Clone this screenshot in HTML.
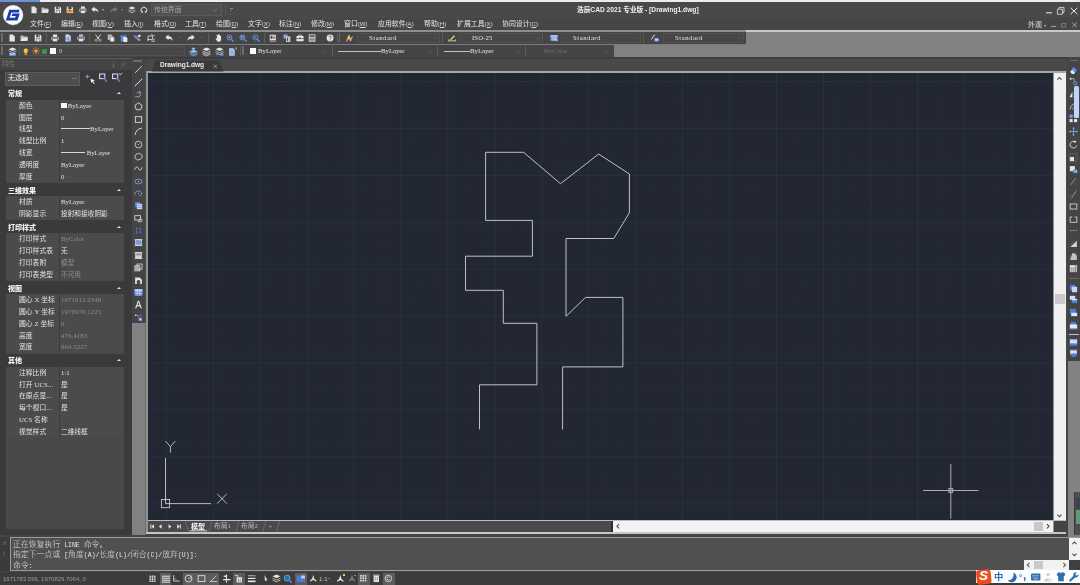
<!DOCTYPE html><html lang="zh"><head><meta charset="utf-8"><title>浩辰CAD 2021 专业版 - [Drawing1.dwg]</title><style>
*{box-sizing:border-box}
html,body{margin:0;padding:0}
body{width:1080px;height:585px;position:relative;overflow:hidden;background:#454545;
 font-family:"Liberation Sans","Noto Sans CJK SC",sans-serif;font-size:6.75px;color:#e4e4e4;line-height:1}
.a{position:absolute}
.t{position:absolute;white-space:nowrap;line-height:1}
.t,.mn,.row,.hd{will-change:transform}
svg{position:absolute;overflow:visible}
.mn{position:absolute;top:21.2px;white-space:nowrap;color:#e6e6e6;font-size:6.9px}
.mn i{font-style:normal;font-size:6.1px;letter-spacing:0;color:#d8d8d8}
.mn u{text-decoration-thickness:0.5px;text-underline-offset:0.5px}
.sf{font-family:"Liberation Serif","Noto Serif CJK SC",serif}
.mono{font-family:"Liberation Mono","Noto Sans CJK SC",monospace}
.row{position:absolute;left:6px;width:118px;height:11.3px;background:#4b4a4d}
.row b{position:absolute;left:13px;top:3.0px;font-weight:normal;color:#e2e2e2;font-size:6.8px;white-space:nowrap}
.row s{position:absolute;left:55px;top:2.4px;text-decoration:none;color:#e2e2e2;font-size:6.3px;white-space:nowrap}
.row .d{color:#8d8d90}
.row em{position:absolute;left:53px;top:0;width:.6px;height:100%;background:#3c3c3e}
.hd{position:absolute;left:6px;width:118px;height:12.6px;color:#f2f2f2;font-weight:bold;font-size:7px}
.hd b{position:absolute;left:2px;top:2.6px;white-space:nowrap}
.hd i{position:absolute;left:110.6px;top:5px;width:0;height:0;border-left:2px solid transparent;border-right:2px solid transparent;border-bottom:2.4px solid #e6e6e6}
</style></head><body>
<div class="a" style="left:0px;top:0px;width:1080px;height:2px;background:#ececf0;"></div>
<div class="a" style="left:0px;top:0px;width:40px;height:1.8px;background:#6f8fdc;"></div>
<div class="a" style="left:0px;top:2px;width:1080px;height:28.3px;background:#474647;"></div>
<div class="a" style="left:0px;top:2px;width:1080px;height:16.2px;background:#4a494a;"></div>
<div class="a" style="left:0px;top:30.2px;width:1080px;height:1.6px;background:#c9c9c9;"></div>
<div class="a" style="left:0px;top:30.2px;width:746px;height:1.6px;background:#8e8e8e;"></div>
<div class="a" style="left:0px;top:31.7px;width:1080px;height:25.3px;background:#838182;"></div>
<div class="a" style="left:0px;top:31.7px;width:746px;height:12.1px;background:#454545;"></div>
<div class="a" style="left:0px;top:43.8px;width:746px;height:1.4px;background:#7c7b7c;"></div>
<div class="a" style="left:0px;top:45.2px;width:614px;height:11.6px;background:#454545;"></div>
<div class="a" style="left:0px;top:56.8px;width:1080px;height:2px;background:#3d3d3d;"></div>
<div class="a" style="left:0px;top:58.4px;width:131.5px;height:0.9px;background:#5a5a5a;"></div>
<div class="a" style="left:0px;top:59.3px;width:131.5px;height:476px;background:#3a393c;"></div>
<div class="a" style="left:0px;top:59.3px;width:131.5px;height:10.6px;background:#444345;"></div>
<div class="a" style="left:6px;top:100px;width:118px;height:428.7px;background:#4a484b;"></div>
<div class="a" style="left:131.5px;top:59.3px;width:13.3px;height:264px;background:#444444;"></div>
<div class="a" style="left:131.5px;top:323px;width:13.2px;height:212.5px;background:#828182;"></div>
<div class="a" style="left:144.8px;top:59.3px;width:1.3px;height:264px;background:#4a4a4a;"></div>
<div class="a" style="left:144.8px;top:323.3px;width:1.3px;height:212px;background:#6e6e6e;"></div>
<div class="a" style="left:146.5px;top:59.3px;width:920px;height:12.5px;background:#494949;"></div>
<div class="a" style="left:146.1px;top:71.2px;width:920.4px;height:462.6px;background:#c6c6c6;"></div>
<div class="a" style="left:146.1px;top:71.2px;width:919px;height:461px;background:#8f9292;"></div>
<div class="a" style="left:148px;top:71.2px;width:917px;height:1.8px;background:#a6a6a6;"></div>
<div class="a" style="left:148.2px;top:73px;width:905.3px;height:447px;background:#222733;"></div>
<div class="a" style="left:1053.5px;top:73px;width:12px;height:447px;background:#f0f0f0;"></div>
<div class="a" style="left:148.2px;top:520px;width:917px;height:1.1px;background:#bcbcbc;"></div>
<div class="a" style="left:148px;top:521px;width:464px;height:11px;background:#4a4a4a;"></div>
<div class="a" style="left:612px;top:521px;width:441px;height:10.6px;background:#f2f2f2;"></div>
<div class="a" style="left:1053.5px;top:521px;width:12px;height:10.6px;background:#444;"></div>
<div class="a" style="left:146.5px;top:533.6px;width:920px;height:3.6px;background:#444;"></div>
<div class="a" style="left:0px;top:535.3px;width:146.5px;height:2px;background:#444;"></div>
<div class="a" style="left:1066.3px;top:57px;width:1.2px;height:304px;background:#474747;"></div>
<div class="a" style="left:1067.5px;top:57px;width:12.5px;height:304px;background:#444444;"></div>
<div class="a" style="left:1067.5px;top:361px;width:12.5px;height:176px;background:#838283;"></div>
<div class="a" style="left:0px;top:537.2px;width:1080px;height:34px;background:#3b3b3b;"></div>
<div class="a" style="left:9.6px;top:537.2px;width:1070.4px;height:34.3px;background:#9c9c9c;"></div>
<div class="a" style="left:10.6px;top:538.2px;width:1069.4px;height:32.3px;background:#505050;"></div>
<div class="a" style="left:0px;top:571.5px;width:1080px;height:13.5px;background:#3c3c3c;"></div>
<svg style="left:148px;top:73px" width="905" height="447" viewBox="148 73 905 447"><defs><clipPath id="cv"><rect x="148" y="73" width="905" height="447"/></clipPath></defs><g clip-path="url(#cv)"><path d="M156.86 73V520M166.25 73V520M175.64 73V520M185.03 73V520M194.42 73V520M203.81 73V520M213.20 73V520M222.59 73V520M231.98 73V520M241.37 73V520M250.76 73V520M260.15 73V520M269.54 73V520M278.93 73V520M288.32 73V520M297.71 73V520M307.10 73V520M316.49 73V520M325.88 73V520M335.27 73V520M344.66 73V520M354.05 73V520M363.44 73V520M372.83 73V520M382.22 73V520M391.61 73V520M401.00 73V520M410.39 73V520M419.78 73V520M429.17 73V520M438.56 73V520M447.95 73V520M457.34 73V520M466.73 73V520M476.12 73V520M485.51 73V520M494.90 73V520M504.29 73V520M513.68 73V520M523.07 73V520M532.46 73V520M541.85 73V520M551.24 73V520M560.63 73V520M570.02 73V520M579.41 73V520M588.80 73V520M598.19 73V520M607.58 73V520M616.97 73V520M626.36 73V520M635.75 73V520M645.14 73V520M654.53 73V520M663.92 73V520M673.31 73V520M682.70 73V520M692.09 73V520M701.48 73V520M710.87 73V520M720.26 73V520M729.65 73V520M739.04 73V520M748.43 73V520M757.82 73V520M767.21 73V520M776.60 73V520M785.99 73V520M795.38 73V520M804.77 73V520M814.16 73V520M823.55 73V520M832.94 73V520M842.33 73V520M851.72 73V520M861.11 73V520M870.50 73V520M879.89 73V520M889.28 73V520M898.67 73V520M908.06 73V520M917.45 73V520M926.84 73V520M936.23 73V520M945.62 73V520M955.01 73V520M964.40 73V520M973.79 73V520M983.18 73V520M992.57 73V520M1001.96 73V520M1011.35 73V520M1020.74 73V520M1030.13 73V520M1039.52 73V520M1048.91 73V520M148 81.35H1053M148 90.74H1053M148 100.13H1053M148 109.52H1053M148 118.91H1053M148 128.30H1053M148 137.69H1053M148 147.08H1053M148 156.47H1053M148 165.86H1053M148 175.25H1053M148 184.64H1053M148 194.03H1053M148 203.42H1053M148 212.81H1053M148 222.20H1053M148 231.59H1053M148 240.98H1053M148 250.37H1053M148 259.76H1053M148 269.15H1053M148 278.54H1053M148 287.93H1053M148 297.32H1053M148 306.71H1053M148 316.10H1053M148 325.49H1053M148 334.88H1053M148 344.27H1053M148 353.66H1053M148 363.05H1053M148 372.44H1053M148 381.83H1053M148 391.22H1053M148 400.61H1053M148 410.00H1053M148 419.39H1053M148 428.78H1053M148 438.17H1053M148 447.56H1053M148 456.95H1053M148 466.34H1053M148 475.73H1053M148 485.12H1053M148 494.51H1053M148 503.90H1053M148 513.29H1053" stroke="#252a36" stroke-width="0.6" fill="none"/><path d="M166.25 73V520M213.20 73V520M260.15 73V520M307.10 73V520M354.05 73V520M401.00 73V520M447.95 73V520M494.90 73V520M541.85 73V520M588.80 73V520M635.75 73V520M682.70 73V520M729.65 73V520M776.60 73V520M823.55 73V520M870.50 73V520M917.45 73V520M964.40 73V520M1011.35 73V520M148 81.35H1053M148 128.30H1053M148 175.25H1053M148 222.20H1053M148 269.15H1053M148 316.10H1053M148 363.05H1053M148 410.00H1053M148 456.95H1053M148 503.90H1053" stroke="#323845" stroke-width="0.55" fill="none"/><polyline points="479.5,429.5 479.5,384.8 536.9,384.8 536.9,323.3 503.3,323.3 503.3,290.3 465.5,290.3 465.5,256.2 532.4,256.2 532.4,220.4 485.6,220.4 485.6,152.3 523.6,152.3 560.5,183.7 598.7,154 629.4,174 629.4,212.8 613.8,238.5 566,238.5 566,316.3 585.5,297.4 622.9,297.4 622.9,366.9 562.6,366.9 562.6,429.5" stroke="#cfd2d8" stroke-width="0.9" fill="none" stroke-linejoin="miter"/><g stroke="#cfd2d8" stroke-width="0.85" fill="none"><rect x="161.4" y="499.5" width="8.2" height="8.2"/><path d="M165.5 503.6V458M165.5 503.6H211"/><path d="M165.6 441.2L170.4 446.6L175.3 441.2M170.4 446.6V452.6"/><path d="M217.2 493.8L226.8 503.6M226.8 493.8L217.2 503.6"/></g><g stroke="#b9bcc4" stroke-width="0.9" fill="none"><path d="M923 490.5H978.5M950.8 463.8V518.6"/><rect x="948.9" y="488.6" width="3.8" height="3.8"/></g></g></svg>
<svg style="left:2.6px;top:4.7px" width="20.2" height="20.2" viewBox="0 0 40 40"><circle cx="20" cy="20" r="19.6" fill="#fbfcff"/><circle cx="20" cy="20" r="19.6" fill="none" stroke="#dfe6d8" stroke-width="0.8"/><path d="M12.5 9.5H33l-2 5.6H16.6L13 25.4h11l1.3-3.8H17.2l1.5-4.6h14.6L28.6 30.8H5.6z" fill="#1d3bb0"/></svg>
<svg style="left:29.50px;top:6.30px" width="7.8" height="7.8" viewBox="0 0 16 16"><path d="M3 1h7l3.5 3.5V15H3z" fill="#e6e6e6"/><path d="M10 1v3.5h3.5z" fill="#9a9a9a"/></svg>
<svg style="left:41.10px;top:6.30px" width="7.8" height="7.8" viewBox="0 0 16 16"><path d="M1 3h5l1.5 2H15v9H1z" fill="#bdbdbd"/><path d="M1 14l2.5-6.5H16L14 14z" fill="#e6e6e6"/></svg>
<svg style="left:53.90px;top:6.30px" width="7.8" height="7.8" viewBox="0 0 16 16"><path d="M1.5 1.5h11l2 2v11h-13z" fill="#e6e6e6"/><rect x="4.5" y="1.5" width="7" height="5" fill="#454545"/><rect x="8.6" y="2.3" width="1.8" height="3.2" fill="#e6e6e6"/><rect x="3.8" y="9" width="8.4" height="5.5" fill="#454545"/><rect x="4.8" y="10" width="6.4" height="4.5" fill="#e6e6e6"/></svg>
<svg style="left:66.30px;top:6.30px" width="7.8" height="7.8" viewBox="0 0 16 16"><path d="M1.5 1.5h11l2 2v11h-13z" fill="#f3d9c4"/><rect x="4.5" y="1.5" width="7" height="4.6" fill="#454545"/><path d="M1.5 8h13v3.5L9.600 15.400H6.400L1.500 11.500z" fill="#ee9a4a"/><path d="M5 7.600h6l-3 3.600z" fill="#454545"/></svg>
<svg style="left:78.90px;top:6.30px" width="7.8" height="7.8" viewBox="0 0 16 16"><rect x="4" y="1" width="8" height="5" fill="#e6e6e6"/><rect x="0.8" y="5.2" width="14.4" height="7" rx="1" fill="#bdbdbd"/><rect x="3.5" y="9.3" width="9" height="5.7" fill="#e6e6e6" stroke="#454545" stroke-width="0.9"/><rect x="2" y="6.7" width="12" height="1" fill="#454545"/></svg>
<svg style="left:91.10px;top:6.30px" width="7.8" height="7.8" viewBox="0 0 16 16"><path d="M0.8 6.5L7 1.2v3.2c5 0 8 3 8.2 9.6-1.6-3.6-4-4.8-8.2-4.8v3.4z" fill="#e6e6e6"/></svg>
<svg style="left:110.30px;top:6.30px" width="7.8" height="7.8" viewBox="0 0 16 16"><path d="M15.2 6.5L9 1.2v3.2c-5 0-8 3-8.2 9.6 1.6-3.6 4-4.8 8.2-4.8v3.4z" fill="#777"/></svg>
<svg style="left:128.30px;top:6.30px" width="7.8" height="7.8" viewBox="0 0 16 16"><path d="M8 1l7 3.2-7 3.2-7-3.2z" fill="#e6e6e6"/><path d="M1 7.6l7 3.2 7-3.2M1 10.8l7 3.2 7-3.2" stroke="#bdbdbd" stroke-width="1.6" fill="none"/></svg>
<svg style="left:140.10px;top:6.30px" width="7.8" height="7.8" viewBox="0 0 16 16"><path d="M3.5 12.5A6 6 0 1 1 12.5 12.5" fill="none" stroke="#e6e6e6" stroke-width="2"/><path d="M1 11h5v4z" fill="#e6e6e6"/><path d="M15 11h-5v4z" fill="#e6e6e6"/></svg>
<div class="a" style="left:102.1px;top:9.450000000000001px;width:0;height:0;border-left:1.9px solid transparent;border-right:1.9px solid transparent;border-top:2.28px solid #b5b5b5"></div>
<div class="a" style="left:121.39999999999999px;top:9.450000000000001px;width:0;height:0;border-left:1.9px solid transparent;border-right:1.9px solid transparent;border-top:2.28px solid #858585"></div>
<div class="a" style="left:151px;top:3.8px;width:70.5px;height:12.2px;background:#4f4f4f;border:0.6px solid #5a5a5a"></div>
<div class="t " style="left:153.5px;top:6.6px;font-size:6.9px;color:#a2a2a2;">传统界面</div>
<svg style="left:212.60px;top:9.10px" width="4" height="2.6" viewBox="0 0 4 2.6"><path d="M0.3 0.3L2 2.2L3.7 0.3" fill="none" stroke="#7b7b7b" stroke-width="0.8"/></svg>
<div class="a" style="left:225.4px;top:4px;width:0.7px;height:12px;background:#555;"></div>
<div class="a" style="left:229.79999999999998px;top:9.5px;width:0;height:0;border-left:1.4px solid transparent;border-right:1.4px solid transparent;border-top:1.68px solid #8a8a8a"></div>
<div class="a" style="left:229.8px;top:8.2px;width:2.8px;height:0.7px;background:#8a8a8a;"></div>
<div class="t " style="left:577px;top:7.1px;font-size:6.7px;color:#f0f0f0;font-weight:bold;letter-spacing:-0.02px">浩辰CAD 2021 专业版 - [Drawing1.dwg]</div>
<svg style="left:1044px;top:5px" width="36" height="12" viewBox="1044 5 36 12"><g stroke="#e4e4e4" fill="none"><path d="M1046 12.8h6" stroke-width="1.1"/><path d="M1057.4 9.2h5v5h-5zM1059 9.2V7.4h5v5h-1.6" stroke-width="0.8"/><path d="M1070.6 7.8l6.8 6.4M1077.4 7.8l-6.8 6.4" stroke-width="1"/></g></svg>
<div class="mn" style="left:30.4px">文件<i>(<u>F</u>)</i></div>
<div class="mn" style="left:61.2px">编辑<i>(<u>E</u>)</i></div>
<div class="mn" style="left:92.4px">视图<i>(<u>V</u>)</i></div>
<div class="mn" style="left:123.6px">插入<i>(<u>I</u>)</i></div>
<div class="mn" style="left:153.6px">格式<i>(<u>O</u>)</i></div>
<div class="mn" style="left:185.2px">工具<i>(<u>T</u>)</i></div>
<div class="mn" style="left:216.2px">绘图<i>(<u>D</u>)</i></div>
<div class="mn" style="left:248.2px">文字<i>(<u>X</u>)</i></div>
<div class="mn" style="left:279.4px">标注<i>(<u>N</u>)</i></div>
<div class="mn" style="left:311.4px">修改<i>(<u>M</u>)</i></div>
<div class="mn" style="left:344.4px">窗口<i>(<u>W</u>)</i></div>
<div class="mn" style="left:378.4px">应用软件<i>(<u>A</u>)</i></div>
<div class="mn" style="left:424.4px">帮助<i>(<u>H</u>)</i></div>
<div class="mn" style="left:456.6px">扩展工具<i>(<u>X</u>)</i></div>
<div class="mn" style="left:502.2px">协同设计<i>(<u>C</u>)</i></div>
<div class="t " style="left:1027.6px;top:21.9px;font-size:6.9px;color:#e0e0e0;">外观</div>
<div class="a" style="left:1043.5px;top:24.75px;width:0;height:0;border-left:1.7px solid transparent;border-right:1.7px solid transparent;border-top:2.04px solid #c8c8c8"></div>
<svg style="left:1049px;top:20px" width="31" height="10" viewBox="1049 20 31 10"><g stroke="#bdbdbd" fill="none" stroke-width="0.8"><path d="M1051 26.4h5"/><path d="M1061.4 23.6h4.4v3.4h-4.4z" stroke="#8d8d8d"/><path d="M1072.4 22.8l4.4 4.2M1076.8 22.8l-4.4 4.2"/></g></svg>
<div class="a" style="left:1.2px;top:33px;width:1.6px;height:9px;background:#6b6b6b;"></div>
<svg style="left:7.95px;top:33.75px" width="8.1" height="8.1" viewBox="0 0 16 16"><path d="M3 1h7l3.5 3.5V15H3z" fill="#e6e6e6"/><path d="M10 1v3.5h3.5z" fill="#9a9a9a"/></svg>
<svg style="left:20.45px;top:33.75px" width="8.1" height="8.1" viewBox="0 0 16 16"><path d="M1 3h5l1.5 2H15v9H1z" fill="#bdbdbd"/><path d="M1 14l2.5-6.5H16L14 14z" fill="#e6e6e6"/></svg>
<svg style="left:33.55px;top:33.75px" width="8.1" height="8.1" viewBox="0 0 16 16"><path d="M1.5 1.5h11l2 2v11h-13z" fill="#e6e6e6"/><rect x="4.5" y="1.5" width="7" height="5" fill="#454545"/><rect x="8.6" y="2.3" width="1.8" height="3.2" fill="#e6e6e6"/><rect x="3.8" y="9" width="8.4" height="5.5" fill="#454545"/><rect x="4.8" y="10" width="6.4" height="4.5" fill="#e6e6e6"/></svg>
<svg style="left:50.95px;top:33.75px" width="8.1" height="8.1" viewBox="0 0 16 16"><rect x="4" y="1" width="8" height="5" fill="#e6e6e6"/><rect x="0.8" y="5.2" width="14.4" height="7" rx="1" fill="#bdbdbd"/><rect x="3.5" y="9.3" width="9" height="5.7" fill="#e6e6e6" stroke="#454545" stroke-width="0.9"/><rect x="2" y="6.7" width="12" height="1" fill="#454545"/></svg>
<svg style="left:63.95px;top:33.75px" width="8.1" height="8.1" viewBox="0 0 16 16"><path d="M3 1h7l3.5 3.5V15H3z" fill="#c9d6ee"/><path d="M10 1v3.5h3.5z" fill="#8ea6d6"/><circle cx="8" cy="9.5" r="2.6" fill="none" stroke="#3d66c4" stroke-width="1.3"/><path d="M10 11.5l2.4 2.4" stroke="#3d66c4" stroke-width="1.4"/></svg>
<svg style="left:76.95px;top:33.75px" width="8.1" height="8.1" viewBox="0 0 16 16"><rect x="4" y="0.5" width="8" height="5" fill="#9db8ee"/><rect x="0.8" y="5.2" width="14.4" height="7" rx="1" fill="#bdbdbd"/><rect x="3.5" y="9.3" width="9" height="5.7" fill="#e6e6e6" stroke="#454545" stroke-width="0.9"/><rect x="2" y="6.7" width="12" height="1" fill="#454545"/></svg>
<svg style="left:93.95px;top:33.75px" width="8.1" height="8.1" viewBox="0 0 16 16"><path d="M3 1l6.2 9M13 1L6.8 10" stroke="#e6e6e6" stroke-width="1.8" fill="none"/><circle cx="4.3" cy="12.4" r="2.2" fill="none" stroke="#bdbdbd" stroke-width="1.5"/><circle cx="11.7" cy="12.4" r="2.2" fill="none" stroke="#bdbdbd" stroke-width="1.5"/></svg>
<svg style="left:106.95px;top:33.75px" width="8.1" height="8.1" viewBox="0 0 16 16"><path d="M1.5 1h7l2 2v9h-9z" fill="#bdbdbd"/><path d="M6 5h6l2.5 2.5V15.5H6z" fill="#e6e6e6" stroke="#454545" stroke-width="0.8"/></svg>
<svg style="left:119.95px;top:33.75px" width="8.1" height="8.1" viewBox="0 0 16 16"><rect x="1.5" y="2" width="11" height="13" rx="1" fill="#5b8be0"/><rect x="4.5" y="0.8" width="5" height="3" fill="#2f55b0"/><path d="M6.5 6h5.5l2.5 2.5V15.6H6.5z" fill="#e6e6e6"/></svg>
<svg style="left:132.95px;top:33.75px" width="8.1" height="8.1" viewBox="0 0 16 16"><path d="M1 2l6 1.5 5 6-3 3-6-5z" fill="#6b7fe0"/><path d="M9 3l5-2 1.5 3.5-4 2.5z" fill="#e6e6e6"/><path d="M12 9l2.5 3-2 2.5-2.5-3z" fill="#f0c040"/></svg>
<svg style="left:146.55px;top:33.75px" width="8.1" height="8.1" viewBox="0 0 16 16"><rect x="2" y="4" width="9" height="7" fill="none" stroke="#e6e6e6" stroke-width="1.5"/><path d="M8 1l7 3" stroke="#e6e6e6" stroke-width="1.4"/><rect x="9" y="9.5" width="6" height="6" fill="#bdbdbd"/><rect x="10.6" y="11" width="2.8" height="3" fill="#454545"/><rect x="1" y="10" width="3" height="3" fill="#e6e6e6"/></svg>
<svg style="left:164.95px;top:33.75px" width="8.1" height="8.1" viewBox="0 0 16 16"><path d="M0.8 6.5L7 1.2v3.2c5 0 8 3 8.2 9.6-1.6-3.6-4-4.8-8.2-4.8v3.4z" fill="#e6e6e6"/></svg>
<svg style="left:186.95px;top:33.75px" width="8.1" height="8.1" viewBox="0 0 16 16"><path d="M15.2 6.5L9 1.2v3.2c-5 0-8 3-8.2 9.6 1.6-3.6 4-4.8 8.2-4.8v3.4z" fill="#e6e6e6"/></svg>
<svg style="left:214.55px;top:33.75px" width="8.1" height="8.1" viewBox="0 0 16 16"><path d="M4 7V2.5a1 1 0 0 1 2 0V6V1.5a1 1 0 0 1 2 0V6V2.2a1 1 0 0 1 2 0V7l0-2.5a1 1 0 0 1 2 0V11c0 2.5-1.5 4.5-4 4.5S3.5 14 2 10.5L1 8.5c.8-1 2-.8 3 .5z" fill="#e6e6e6"/><path d="M1.5 2.5h3M3 1v3" stroke="#67c0a0" stroke-width="1"/></svg>
<svg style="left:226.15px;top:33.75px" width="8.1" height="8.1" viewBox="0 0 16 16"><circle cx="6.8" cy="6.8" r="5" fill="#31426a" stroke="#6f9be8" stroke-width="1.7"/><path d="M10.6 10.6l4.2 4.2" stroke="#6f9be8" stroke-width="2.2"/><path d="M4.3 6.8h5M6.8 4.3v5" stroke="#e6e6e6" stroke-width="1"/></svg>
<svg style="left:238.55px;top:33.75px" width="8.1" height="8.1" viewBox="0 0 16 16"><circle cx="6.8" cy="6.8" r="5" fill="#31426a" stroke="#6f9be8" stroke-width="1.7"/><path d="M10.6 10.6l4.2 4.2" stroke="#6f9be8" stroke-width="2.2"/><rect x="4.4" y="4.8" width="4.8" height="4" fill="none" stroke="#e6e6e6" stroke-width="0.9"/></svg>
<svg style="left:251.95px;top:33.75px" width="8.1" height="8.1" viewBox="0 0 16 16"><circle cx="6.8" cy="6.8" r="5" fill="#31426a" stroke="#6f9be8" stroke-width="1.7"/><path d="M10.6 10.6l4.2 4.2" stroke="#6f9be8" stroke-width="2.2"/><path d="M9 6.8H4.8l2-2M4.8 6.8l2 2" stroke="#e6e6e6" stroke-width="0.9" fill="none"/></svg>
<svg style="left:268.95px;top:33.75px" width="8.1" height="8.1" viewBox="0 0 16 16"><rect x="1.5" y="1.5" width="12" height="11" fill="#e6e6e6"/><rect x="3" y="3.5" width="4" height="6" fill="#454545"/><rect x="8.5" y="3.5" width="3.5" height="1.2" fill="#454545"/><rect x="8.5" y="6" width="3.5" height="1.2" fill="#454545"/><rect x="8.5" y="8.5" width="3.5" height="1.2" fill="#454545"/><rect x="1.5" y="13.5" width="12" height="1.5" fill="#bdbdbd"/></svg>
<svg style="left:282.55px;top:33.75px" width="8.1" height="8.1" viewBox="0 0 16 16"><rect x="1" y="1" width="8" height="8" fill="#8aa6e6"/><rect x="6" y="5" width="8.5" height="10.5" fill="#e6e6e6"/><rect x="7.5" y="7" width="2.3" height="7" fill="#454545"/><rect x="11" y="7" width="2" height="7" fill="#7f9be0"/></svg>
<svg style="left:295.55px;top:33.75px" width="8.1" height="8.1" viewBox="0 0 16 16"><path d="M5 4V2h6v2" fill="none" stroke="#e6e6e6" stroke-width="1.4"/><rect x="1" y="4" width="14" height="10.5" rx="1" fill="#e6e6e6"/><rect x="1" y="8" width="14" height="1.3" fill="#454545"/><rect x="6.8" y="7" width="2.4" height="3.2" fill="#454545"/></svg>
<svg style="left:307.95px;top:33.75px" width="8.1" height="8.1" viewBox="0 0 16 16"><rect x="1.5" y="0.8" width="13" height="14.6" fill="#e6e6e6"/><rect x="3" y="2.4" width="10" height="3" fill="#454545"/><rect x="3.0" y="7.0" width="2.6" height="1.8" fill="#454545"/><rect x="3.0" y="9.8" width="2.6" height="1.8" fill="#454545"/><rect x="3.0" y="12.6" width="2.6" height="1.8" fill="#454545"/><rect x="6.6" y="7.0" width="2.6" height="1.8" fill="#454545"/><rect x="6.6" y="9.8" width="2.6" height="1.8" fill="#454545"/><rect x="6.6" y="12.6" width="2.6" height="1.8" fill="#454545"/><rect x="10.2" y="7.0" width="2.6" height="1.8" fill="#454545"/><rect x="10.2" y="9.8" width="2.6" height="1.8" fill="#454545"/><rect x="10.2" y="12.6" width="2.6" height="1.8" fill="#454545"/></svg>
<svg style="left:325.55px;top:33.75px" width="8.1" height="8.1" viewBox="0 0 16 16"><circle cx="8" cy="8" r="6.8" fill="#e6e6e6"/><path d="M5.6 6.2c0-3.4 5-3.2 4.8 0 0 1.6-2.4 1.8-2.4 3.8" fill="none" stroke="#555" stroke-width="1.5"/><circle cx="8" cy="12" r="1" fill="#555"/></svg>
<svg style="left:344.95px;top:33.75px" width="8.1" height="8.1" viewBox="0 0 16 16"><path d="M2 14L7 2h1.6L13 14h-2.2l-1-3H5.2l-1 3z" fill="#e8c840"/><path d="M9 13l5.5-9 1 1-4 9z" fill="#d8a8e8"/><path d="M1 15h8" stroke="#c060d0" stroke-width="1"/></svg>
<svg style="left:447.55px;top:33.75px" width="8.1" height="8.1" viewBox="0 0 16 16"><path d="M1 13.5h14" stroke="#e6e6e6" stroke-width="1.6"/><path d="M1 10v5M15 10v5" stroke="#e6e6e6" stroke-width="1"/><path d="M4 11l7.5-8.5 2.5 2L6.5 12 3.4 12.6z" fill="#f0d060"/></svg>
<svg style="left:549.55px;top:33.75px" width="8.1" height="8.1" viewBox="0 0 16 16"><rect x="1" y="2" width="14" height="12" fill="#5f86dc"/><path d="M1 6h14M1 10h14M6 2v12M10.5 2v12" stroke="#dfe8fb" stroke-width="1.1"/><rect x="1" y="2" width="14" height="3.4" fill="#a9c0f0"/><path d="M9 9l6 5" stroke="#fff" stroke-width="1.5"/></svg>
<svg style="left:650.95px;top:33.75px" width="8.1" height="8.1" viewBox="0 0 16 16"><path d="M1 11L6 2h2" fill="none" stroke="#e6e6e6" stroke-width="1.7"/><rect x="6.5" y="7.5" width="9" height="7.5" fill="#5f86dc"/><rect x="8" y="9.6" width="6" height="3.6" fill="#cfdcf8"/></svg>
<div class="a" style="left:45.5px;top:32.6px;width:0.8px;height:10px;background:#5c5c5c;"></div>
<div class="a" style="left:89.1px;top:32.6px;width:0.8px;height:10px;background:#5c5c5c;"></div>
<div class="a" style="left:207.5px;top:32.6px;width:0.8px;height:10px;background:#5c5c5c;"></div>
<div class="a" style="left:263.5px;top:32.6px;width:0.8px;height:10px;background:#5c5c5c;"></div>
<div class="a" style="left:336.5px;top:32.6px;width:0.8px;height:10px;background:#5c5c5c;"></div>
<div class="a" style="left:441.5px;top:32.6px;width:0.8px;height:10px;background:#5c5c5c;"></div>
<div class="a" style="left:541.5px;top:32.6px;width:0.8px;height:10px;background:#5c5c5c;"></div>
<div class="a" style="left:642.5px;top:32.6px;width:0.8px;height:10px;background:#5c5c5c;"></div>
<div class="a" style="left:338.8px;top:33px;width:1.6px;height:9px;background:#6b6b6b;"></div>
<div class="a" style="left:178.7px;top:37.35px;width:0;height:0;border-left:1.3px solid transparent;border-right:1.3px solid transparent;border-top:1.56px solid #7c7c7c"></div>
<div class="a" style="left:200.7px;top:37.35px;width:0;height:0;border-left:1.3px solid transparent;border-right:1.3px solid transparent;border-top:1.56px solid #7c7c7c"></div>
<div class="a" style="left:357px;top:32.8px;width:83px;height:10px;background:#474747;border:0.5px solid #505050"></div>
<div class="a" style="left:459px;top:32.8px;width:81px;height:10px;background:#474747;border:0.5px solid #505050"></div>
<div class="a" style="left:561px;top:32.8px;width:80px;height:10px;background:#474747;border:0.5px solid #505050"></div>
<div class="a" style="left:663px;top:32.8px;width:81px;height:10px;background:#474747;border:0.5px solid #505050"></div>
<div class="t sf" style="left:369.2px;top:34.8px;font-size:6.75px;color:#e6e6e6;letter-spacing:0.5px">Standard</div>
<div class="t sf" style="left:472.2px;top:34.8px;font-size:6.75px;color:#e6e6e6;letter-spacing:0.1px">ISO-25</div>
<div class="t sf" style="left:573.2px;top:34.8px;font-size:6.75px;color:#e6e6e6;letter-spacing:0.5px">Standard</div>
<div class="t sf" style="left:675.2px;top:34.8px;font-size:6.75px;color:#e6e6e6;letter-spacing:0.5px">Standard</div>
<svg style="left:433.00px;top:36.60px" width="4" height="2.6" viewBox="0 0 4 2.6"><path d="M0.3 0.3L2 2.2L3.7 0.3" fill="none" stroke="#5a5a5a" stroke-width="0.8"/></svg>
<svg style="left:535.00px;top:36.60px" width="4" height="2.6" viewBox="0 0 4 2.6"><path d="M0.3 0.3L2 2.2L3.7 0.3" fill="none" stroke="#5a5a5a" stroke-width="0.8"/></svg>
<svg style="left:635.00px;top:36.60px" width="4" height="2.6" viewBox="0 0 4 2.6"><path d="M0.3 0.3L2 2.2L3.7 0.3" fill="none" stroke="#5a5a5a" stroke-width="0.8"/></svg>
<svg style="left:737.00px;top:36.60px" width="4" height="2.6" viewBox="0 0 4 2.6"><path d="M0.3 0.3L2 2.2L3.7 0.3" fill="none" stroke="#5a5a5a" stroke-width="0.8"/></svg>
<div class="a" style="left:1.2px;top:46.4px;width:1.6px;height:9px;background:#6b6b6b;"></div>
<svg style="left:7.50px;top:46.90px" width="9" height="9" viewBox="0 0 16 16"><path d="M8 1l7 3-7 3-7-3z" fill="#e6e6e6"/><path d="M1 7l7 3 7-3" stroke="#bdbdbd" stroke-width="1.5" fill="none"/><rect x="2" y="10" width="12" height="5.5" fill="#6f93e0"/><path d="M3.5 11.8h9M3.5 13.8h9" stroke="#e8eefc" stroke-width="0.9"/></svg>
<svg style="left:189.10px;top:46.90px" width="9" height="9" viewBox="0 0 16 16"><path d="M8 0.5l4 3h-2.4v3H6.4v-3H4z" fill="#8ec6f6"/><path d="M1 8l7 2.8L15 8M1 10.6l7 2.8 7-2.8M1 13l7 2.8 7-2.8" stroke="#7aaef0" stroke-width="1.3" fill="none"/><path d="M8 5l7 2.6-7 2.6-7-2.6z" fill="#9bc4f4"/></svg>
<svg style="left:201.70px;top:46.90px" width="9" height="9" viewBox="0 0 16 16"><path d="M8 1l7 3-7 3-7-3z" fill="#e6e6e6"/><path d="M1 7.2l7 3 7-3M1 10l7 3 7-3M1 12.8l7 3 7-3" stroke="#e6e6e6" stroke-width="1.3" fill="none"/></svg>
<svg style="left:214.50px;top:46.90px" width="9" height="9" viewBox="0 0 16 16"><path d="M8 1l7 3-7 3-7-3z" fill="#e6e6e6"/><path d="M1 7.2l7 3 7-3M1 10l7 3 7-3" stroke="#bdbdbd" stroke-width="1.3" fill="none"/><path d="M9 11h6v4.5H9z" fill="#6f93e0"/><path d="M2 13.5h6" stroke="#79b8a8" stroke-width="1.3"/></svg>
<svg style="left:227.50px;top:46.90px" width="9" height="9" viewBox="0 0 16 16"><path d="M2 2h7l3 3v10.5H2z" fill="#b9c8ee"/><path d="M4 7h6M4 9.5h6M4 12h6" stroke="#5f7fd0" stroke-width="1"/><path d="M12 1l3.5 0 0 5z" fill="#7ec08a"/></svg>
<div class="a" style="left:18.5px;top:46px;width:0.8px;height:10px;background:#5c5c5c;"></div>
<div class="a" style="left:239.5px;top:46px;width:0.8px;height:10px;background:#5c5c5c;"></div>
<div class="a" style="left:242.2px;top:46.4px;width:1.6px;height:9px;background:#6b6b6b;"></div>
<div class="a" style="left:331.5px;top:46px;width:0.8px;height:10px;background:#5c5c5c;"></div>
<div class="a" style="left:436.9px;top:46px;width:0.8px;height:10px;background:#5c5c5c;"></div>
<div class="a" style="left:524.9px;top:46px;width:0.8px;height:10px;background:#5c5c5c;"></div>
<div class="a" style="left:21.5px;top:46px;width:163px;height:10.2px;background:#474747;border:0.5px solid #505050"></div>
<svg style="left:22.20px;top:47.60px" width="7.6" height="7.6" viewBox="0 0 16 16"><path d="M8 1a4.6 4.6 0 0 1 3 8.2V11.5H5V9.2A4.6 4.6 0 0 1 8 1z" fill="#f6c04a"/><rect x="5.6" y="12.2" width="4.8" height="2.6" fill="#c89028"/></svg>
<svg style="left:31.60px;top:47.40px" width="8" height="8" viewBox="0 0 16 16"><circle cx="8" cy="8" r="3.4" fill="#f6a23a"/><path d="M8 0.4V3.2" stroke="#f6a23a" stroke-width="1.6" transform="rotate(0 8 8)"/><path d="M8 0.4V3.2" stroke="#f6a23a" stroke-width="1.6" transform="rotate(45 8 8)"/><path d="M8 0.4V3.2" stroke="#f6a23a" stroke-width="1.6" transform="rotate(90 8 8)"/><path d="M8 0.4V3.2" stroke="#f6a23a" stroke-width="1.6" transform="rotate(135 8 8)"/><path d="M8 0.4V3.2" stroke="#f6a23a" stroke-width="1.6" transform="rotate(180 8 8)"/><path d="M8 0.4V3.2" stroke="#f6a23a" stroke-width="1.6" transform="rotate(225 8 8)"/><path d="M8 0.4V3.2" stroke="#f6a23a" stroke-width="1.6" transform="rotate(270 8 8)"/><path d="M8 0.4V3.2" stroke="#f6a23a" stroke-width="1.6" transform="rotate(315 8 8)"/></svg>
<svg style="left:41.20px;top:48.00px" width="6.8" height="6.8" viewBox="0 0 16 16"><rect x="2.5" y="2.5" width="11" height="11" rx="2" fill="#3f9a4e"/><path d="M5.6 8V6.2a2.4 2.4 0 0 1 4.8 0" fill="none" stroke="#2e7a3c" stroke-width="1.3"/></svg>
<div class="a" style="left:50.2px;top:48.2px;width:6px;height:6px;background:#fafafa;"></div>
<div class="t sf" style="left:58.8px;top:48.4px;font-size:6.75px;color:#cfcfcf;">0</div>
<svg style="left:179.00px;top:50.20px" width="4" height="2.6" viewBox="0 0 4 2.6"><path d="M0.3 0.3L2 2.2L3.7 0.3" fill="none" stroke="#5a5a5a" stroke-width="0.8"/></svg>
<div class="a" style="left:250.2px;top:48.4px;width:5.8px;height:5.8px;background:#fafafa;"></div>
<div class="t sf" style="left:258px;top:48.4px;font-size:6.75px;color:#e6e6e6;">ByLayer</div>
<svg style="left:323.00px;top:50.20px" width="4" height="2.6" viewBox="0 0 4 2.6"><path d="M0.3 0.3L2 2.2L3.7 0.3" fill="none" stroke="#5a5a5a" stroke-width="0.8"/></svg>
<div class="a" style="left:338px;top:51.2px;width:43px;height:0.55px;background:#c4c4c4;"></div>
<div class="t sf" style="left:381px;top:48.4px;font-size:6.75px;color:#e6e6e6;">ByLayer</div>
<svg style="left:428.00px;top:50.20px" width="4" height="2.6" viewBox="0 0 4 2.6"><path d="M0.3 0.3L2 2.2L3.7 0.3" fill="none" stroke="#5a5a5a" stroke-width="0.8"/></svg>
<div class="a" style="left:444px;top:51.2px;width:26px;height:0.55px;background:#c4c4c4;"></div>
<div class="t sf" style="left:470px;top:48.4px;font-size:6.75px;color:#e6e6e6;">ByLayer</div>
<svg style="left:516.00px;top:50.20px" width="4" height="2.6" viewBox="0 0 4 2.6"><path d="M0.3 0.3L2 2.2L3.7 0.3" fill="none" stroke="#5a5a5a" stroke-width="0.8"/></svg>
<div class="t sf" style="left:543.6px;top:48.4px;font-size:6.75px;color:#6d6d6d;">ByColor</div>
<svg style="left:604.00px;top:50.20px" width="4" height="2.6" viewBox="0 0 4 2.6"><path d="M0.3 0.3L2 2.2L3.7 0.3" fill="none" stroke="#5a5a5a" stroke-width="0.8"/></svg>
<div class="t " style="left:2px;top:61.2px;font-size:6.6px;color:#777;">特性</div>
<svg style="left:111px;top:61px" width="16" height="8" viewBox="111 61 16 8"><g stroke="#6a6a6a" fill="none" stroke-width="0.8"><path d="M113.6 62.6v3.4M112.4 66h2.6M113.7 66v1.8"/><path d="M121.4 62.6l3.6 3.8M125 62.6l-3.6 3.8"/></g></svg>
<div class="a" style="left:5px;top:71.8px;width:74.5px;height:13.8px;background:#4d4c4f;border:0.6px solid #5d5c5f"></div>
<div class="t " style="left:8px;top:75.2px;font-size:6.9px;color:#f0f0f0;">无选择</div>
<div class="a" style="left:72.2px;top:78.4px;width:0.9px;height:0.9px;background:#8a8a8a;"></div>
<div class="a" style="left:74px;top:78.4px;width:0.9px;height:0.9px;background:#8a8a8a;"></div>
<div class="a" style="left:75.8px;top:78.4px;width:0.9px;height:0.9px;background:#8a8a8a;"></div>
<svg style="left:84px;top:72px" width="40" height="14" viewBox="84 72 40 14"><g fill="none"><path d="M87.4 74.6v4M85.4 76.6h4" stroke="#8fa8e8" stroke-width="0.9"/><path d="M90.6 78.4l4.4 2.2-1.8.6 1.6 2.2-.9.6-1.6-2.2-1.2 1.2z" fill="#eee"/><rect x="99.6" y="74" width="5.2" height="4.6" stroke="#dfe6fa" stroke-width="1"/><path d="M103.4 78l3.6 3.6" stroke="#5b7fd6" stroke-width="1.6"/><rect x="112.6" y="74" width="5.2" height="4.6" stroke="#dfe6fa" stroke-width="1"/><path d="M116.4 78l3.6 3.6" stroke="#5b7fd6" stroke-width="1.6"/><path d="M119 73.4l1.6 1.4 1.4-2" stroke="#e8e8e8" stroke-width="0.8"/></g></svg>
<div class="a" style="left:6px;top:86.8px;width:118px;height:13.2px;background:#3a393c;"></div>
<div class="hd" style="top:87.2px"><b>常规</b><i></i></div>
<div class="row" style="top:100.0px"><b>颜色</b><em></em><s class="sf " style="font-size:6.75px;top:2.5px;letter-spacing:0px"><span style="display:inline-block;width:5.6px;height:5.6px;background:#fafafa;vertical-align:-0.6px;margin-right:1.2px"></span>ByLayer</s></div>
<div class="row" style="top:111.5px"><b>图层</b><em></em><s class="sf " style="font-size:6.75px;top:2.5px;letter-spacing:0px">0</s></div>
<div class="row" style="top:123.4px"><b>线型</b><em></em><s class="sf " style="font-size:6.75px;top:2.5px;letter-spacing:0px"><span style="display:inline-block;width:29px;height:0.7px;background:#d8d8d8;vertical-align:1.9px"></span>ByLayer</s></div>
<div class="row" style="top:135.0px"><b>线型比例</b><em></em><s class="sf " style="font-size:6.75px;top:2.5px;letter-spacing:0px">1</s></div>
<div class="row" style="top:147.0px"><b>线宽</b><em></em><s class="sf " style="font-size:6.75px;top:2.5px;letter-spacing:0px"><span style="display:inline-block;width:24px;height:0.7px;background:#d8d8d8;vertical-align:1.9px"></span> ByLayer</s></div>
<div class="row" style="top:158.8px"><b>透明度</b><em></em><s class="sf " style="font-size:6.75px;top:2.5px;letter-spacing:0px">ByLayer</s></div>
<div class="row" style="top:170.7px"><b>厚度</b><em></em><s class="sf " style="font-size:6.75px;top:2.5px;letter-spacing:0px">0</s></div>
<div class="a" style="left:6px;top:183.2px;width:118px;height:13.2px;background:#3a393c;"></div>
<div class="hd" style="top:183.6px"><b>三维效果</b><i></i></div>
<div class="row" style="top:196.0px"><b>材质</b><em></em><s class="sf " style="font-size:6.75px;top:2.5px;letter-spacing:0px">ByLayer</s></div>
<div class="row" style="top:207.7px"><b>阴影显示</b><em></em><s class="" style="font-size:6.7px;top:2.9px">投射和接收阴影</s></div>
<div class="a" style="left:6px;top:220.4px;width:118px;height:13.2px;background:#3a393c;"></div>
<div class="hd" style="top:220.8px"><b>打印样式</b><i></i></div>
<div class="row" style="top:233.0px"><b>打印样式</b><em></em><s class="sf d" style="font-size:6.75px;top:2.5px;letter-spacing:0px">ByColor</s></div>
<div class="row" style="top:244.8px"><b>打印样式表</b><em></em><s class="" style="font-size:6.7px;top:2.9px">无</s></div>
<div class="row" style="top:256.8px"><b>打印表附</b><em></em><s class="d" style="font-size:6.7px;top:2.9px">模型</s></div>
<div class="row" style="top:268.8px"><b>打印表类型</b><em></em><s class="d" style="font-size:6.7px;top:2.9px">不可用</s></div>
<div class="a" style="left:6px;top:281.40000000000003px;width:118px;height:13.2px;background:#3a393c;"></div>
<div class="hd" style="top:281.8px"><b>视图</b><i></i></div>
<div class="row" style="top:294.0px"><b>圆心 <span class="sf">X</span> 坐标</b><em></em><s class="sf d" style="font-size:6.75px;top:2.5px;letter-spacing:0.12px">1671913.2348</s></div>
<div class="row" style="top:305.7px"><b>圆心 <span class="sf">Y</span> 坐标</b><em></em><s class="sf d" style="font-size:6.75px;top:2.5px;letter-spacing:0.12px">1970970.1225</s></div>
<div class="row" style="top:317.6px"><b>圆心 <span class="sf">Z</span> 坐标</b><em></em><s class="sf d" style="font-size:6.75px;top:2.5px;letter-spacing:0px">0</s></div>
<div class="row" style="top:329.5px"><b>高度</b><em></em><s class="sf d" style="font-size:6.75px;top:2.5px;letter-spacing:0.12px">476.4183</s></div>
<div class="row" style="top:341.2px"><b>宽度</b><em></em><s class="sf d" style="font-size:6.75px;top:2.5px;letter-spacing:0.12px">964.3227</s></div>
<div class="a" style="left:6px;top:353.8px;width:118px;height:13.2px;background:#3a393c;"></div>
<div class="hd" style="top:354.2px"><b>其他</b><i></i></div>
<div class="row" style="top:366.5px"><b>注释比例</b><em></em><s class="sf " style="font-size:6.75px;top:2.5px;letter-spacing:0px">1:1</s></div>
<div class="row" style="top:378.6px"><b>打开 <span class="sf">UCS</span>...</b><em></em><s class="" style="font-size:6.7px;top:2.9px">是</s></div>
<div class="row" style="top:390.2px"><b>在原点显...</b><em></em><s class="" style="font-size:6.7px;top:2.9px">是</s></div>
<div class="row" style="top:402.2px"><b>每个视口...</b><em></em><s class="" style="font-size:6.7px;top:2.9px">是</s></div>
<div class="row" style="top:414.0px"><b><span class="sf">UCS</span> 名称</b><em></em><s class="sf " style="font-size:6.75px;top:2.5px;letter-spacing:0px"></s></div>
<div class="row" style="top:425.8px"><b>视觉样式</b><em></em><s class="" style="font-size:6.7px;top:2.9px">二维线框</s></div>
<svg style="left:150px;top:59.6px" width="76" height="12.4" viewBox="150 59.6 76 12.4"><path d="M151.6 71.2L155.4 60.2H219.6L223.6 71.2z" fill="#393939"/><path d="M213.8 64.2l3.2 3.4M217 64.2l-3.2 3.4" stroke="#b4b4b4" stroke-width="0.7"/></svg>
<div class="t " style="left:160.4px;top:62.2px;font-size:6.6px;color:#e8e8e8;font-weight:bold;letter-spacing:-0.05px">Drawing1.dwg</div>
<div class="a" style="left:133.4px;top:60.2px;width:9px;height:1.6px;background:#6b6b6b;"></div>
<svg style="left:133.80px;top:65.30px" width="9" height="9" viewBox="0 0 16 16"><path d="M2 14L14 2" stroke="#e6e6e6" stroke-width="1.5"/></svg>
<svg style="left:133.80px;top:77.67px" width="9" height="9" viewBox="0 0 16 16"><path d="M1.5 14.5L14.5 1.5" stroke="#e6e6e6" stroke-width="1.7"/></svg>
<svg style="left:133.80px;top:90.04px" width="9" height="9" viewBox="0 0 16 16"><path d="M2 12h6a3.6 3.6 0 0 0 0-7.2L5 5" fill="none" stroke="#7f9fe8" stroke-width="1.7"/><path d="M9 2l3 3" stroke="#e6e6e6" stroke-width="1.3"/></svg>
<svg style="left:133.80px;top:102.41px" width="9" height="9" viewBox="0 0 16 16"><path d="M8 1.5l6.4 4.6-2.5 7.6H4.1L1.6 6.1z" fill="none" stroke="#e6e6e6" stroke-width="1.5"/></svg>
<svg style="left:133.80px;top:114.78px" width="9" height="9" viewBox="0 0 16 16"><rect x="2.4" y="3" width="11.2" height="10" fill="none" stroke="#e6e6e6" stroke-width="1.5"/></svg>
<svg style="left:133.80px;top:127.15px" width="9" height="9" viewBox="0 0 16 16"><path d="M2 14C3 7 7 3 14 2" fill="none" stroke="#e6e6e6" stroke-width="1.6"/></svg>
<svg style="left:133.80px;top:139.52px" width="9" height="9" viewBox="0 0 16 16"><circle cx="8" cy="8" r="6" fill="none" stroke="#c9d4f4" stroke-width="1.5"/><path d="M8 8l3.4-3.4" stroke="#7f9fe8" stroke-width="1.2"/><circle cx="8" cy="8" r="1" fill="#e6e6e6"/></svg>
<svg style="left:133.80px;top:151.89px" width="9" height="9" viewBox="0 0 16 16"><path d="M4 12.6a3 3 0 0 1-1.2-5.4A3.4 3.4 0 0 1 7 3.2a3.6 3.6 0 0 1 5.6 1.6 3.2 3.2 0 0 1 .6 5.8 3 3 0 0 1-4.2 2.6A3.4 3.4 0 0 1 4 12.6z" fill="none" stroke="#e6e6e6" stroke-width="1.4"/></svg>
<svg style="left:133.80px;top:164.26px" width="9" height="9" viewBox="0 0 16 16"><path d="M1.5 10c2-6 4.5-6 6.5-2s4.500 4 6.500-2" fill="none" stroke="#e6e6e6" stroke-width="1.5"/></svg>
<svg style="left:133.80px;top:176.63px" width="9" height="9" viewBox="0 0 16 16"><ellipse cx="8" cy="8" rx="6.4" ry="4.2" fill="none" stroke="#7f9fe8" stroke-width="1.6"/><circle cx="8" cy="8" r="1" fill="#e6e6e6"/></svg>
<svg style="left:133.80px;top:189.00px" width="9" height="9" viewBox="0 0 16 16"><path d="M2.4 10.4A6.2 4.4 0 1 1 9 12.3" fill="none" stroke="#7f9fe8" stroke-width="1.6"/><circle cx="8" cy="8" r="0.9" fill="#e6e6e6"/></svg>
<svg style="left:133.80px;top:201.37px" width="9" height="9" viewBox="0 0 16 16"><rect x="2" y="2" width="9" height="9" fill="#5f86dc"/><rect x="5" y="5" width="9.600" height="9.600" fill="#c9d6f6"/><path d="M5 8.200h9.600M5 11.400h9.600" stroke="#5f86dc" stroke-width="0.9"/></svg>
<svg style="left:133.80px;top:213.74px" width="9" height="9" viewBox="0 0 16 16"><rect x="1.5" y="3" width="10" height="7.600" fill="none" stroke="#e6e6e6" stroke-width="1.4"/><circle cx="11.600" cy="11.400" r="2.600" fill="none" stroke="#e6e6e6" stroke-width="1.3"/><path d="M6 13.600h4" stroke="#e6e6e6" stroke-width="1.2"/></svg>
<svg style="left:133.80px;top:226.11px" width="9" height="9" viewBox="0 0 16 16"><path d="M4 2.500l2 4.500M4 9l2 4.500M10 2.500l2 4.500M10 9l2 4.500" stroke="#4f76e0" stroke-width="2"/></svg>
<svg style="left:133.80px;top:238.48px" width="9" height="9" viewBox="0 0 16 16"><rect x="3" y="3" width="10" height="10" fill="#6a8ad8" stroke="#e6e6e6" stroke-width="1.3"/><path d="M1 3h14M1 13h14" stroke="#e6e6e6" stroke-width="1.3"/><path d="M4 12l8-8M4 8l4-4M8 12l4-4" stroke="#dfe6fa" stroke-width="0.7"/></svg>
<svg style="left:133.80px;top:250.85px" width="9" height="9" viewBox="0 0 16 16"><rect x="3" y="3" width="10" height="10" fill="#9a9a9a" stroke="#e6e6e6" stroke-width="1.3"/><path d="M1 3h14M1 13h14" stroke="#e6e6e6" stroke-width="1.3"/><rect x="3.600" y="8" width="8.800" height="4.400" fill="#d6d6d6"/></svg>
<svg style="left:133.80px;top:263.22px" width="9" height="9" viewBox="0 0 16 16"><rect x="1.600" y="5" width="9" height="9" fill="#8a8a8a" stroke="#e6e6e6" stroke-width="1.3"/><rect x="5.400" y="1.800" width="9" height="9" fill="none" stroke="#e6e6e6" stroke-width="1.3"/></svg>
<svg style="left:133.80px;top:275.59px" width="9" height="9" viewBox="0 0 16 16"><path d="M2 2.500h8l4 4v7.500H2z" fill="#e6e6e6"/><path d="M5 9.500a3 2.500 0 0 1 6 0v4.500H5z" fill="#4a4a4a"/></svg>
<svg style="left:133.80px;top:287.96px" width="9" height="9" viewBox="0 0 16 16"><rect x="1" y="2" width="14" height="12" fill="#5f86dc"/><rect x="1" y="2" width="14" height="3.200" fill="#a9c0f0"/><path d="M1 5.400h14M1 9.600h14M5.700 2v12M10.300 2v12" stroke="#e8eefc" stroke-width="1.1"/></svg>
<svg style="left:133.80px;top:300.33px" width="9" height="9" viewBox="0 0 16 16"><path d="M2 14.500L7 1.500h2L14 14.500h-2.200l-1.300-3.600H5.500L4.200 14.500zM6.200 9h3.600L8 4z" fill="#e6e6e6"/></svg>
<svg style="left:133.80px;top:312.70px" width="9" height="9" viewBox="0 0 16 16"><circle cx="3" cy="4" r="1.500" fill="#e6e6e6"/><path d="M5 3.500l4 3" stroke="#e6e6e6" stroke-width="1"/><rect x="8" y="8" width="6.500" height="6.500" fill="#5f86dc"/><circle cx="11.300" cy="11.300" r="1.700" fill="#e6e6e6"/><circle cx="12" cy="3.500" r="1.200" fill="#7f9fe8"/></svg>
<div class="a" style="left:1069.6px;top:59.6px;width:8.6px;height:1.6px;background:#6b6b6b;"></div>
<svg style="left:1069.10px;top:65.50px" width="9" height="9" viewBox="0 0 16 16"><path d="M8 1.500l6 6-5 6.500H5.500L2 10z" fill="#5f8be8"/><path d="M2 10l3.500 4H9l1.500-2-4.500-5z" fill="#dfe6fa"/></svg>
<svg style="left:1069.10px;top:77.10px" width="9" height="9" viewBox="0 0 16 16"><circle cx="3" cy="3" r="1.800" fill="#e6e6e6"/><path d="M5 3h4v4" fill="none" stroke="#e6e6e6" stroke-width="1"/><circle cx="11" cy="11" r="3" fill="none" stroke="#7f9fe8" stroke-width="1.500"/></svg>
<svg style="left:1069.10px;top:89.90px" width="9" height="9" viewBox="0 0 16 16"><path d="M6 13V3L1 13z" fill="#e6e6e6"/><path d="M10 13V3l5 10z" fill="none" stroke="#7f9fe8" stroke-width="1.100"/><path d="M8 1v14" stroke="#9a9a9a" stroke-width="0.700" stroke-dasharray="2 1"/></svg>
<svg style="left:1069.10px;top:101.70px" width="9" height="9" viewBox="0 0 16 16"><path d="M2 13C3 6 7 3 13 2" fill="none" stroke="#e6e6e6" stroke-width="1.300"/><path d="M6 14.500C7 9 10 6.500 15 6" fill="none" stroke="#7f9fe8" stroke-width="1.300"/></svg>
<svg style="left:1069.10px;top:114.30px" width="9" height="9" viewBox="0 0 16 16"><rect x="1" y="1" width="5.500" height="5.500" fill="#7f9fe8"/><rect x="9" y="1" width="5.500" height="5.500" fill="none" stroke="#7f9fe8" stroke-width="1"/><rect x="1" y="9" width="5.500" height="5.500" fill="#e6e6e6"/><rect x="9" y="9" width="5.500" height="5.500" fill="#e6e6e6"/></svg>
<svg style="left:1069.10px;top:127.10px" width="9" height="9" viewBox="0 0 16 16"><path d="M8 1v14M1 8h14" stroke="#7f9fe8" stroke-width="1.600"/><path d="M8 0l2.500 3h-5zM8 16l2.500-3h-5zM0 8l3-2.500v5zM16 8l-3-2.500v5z" fill="#7f9fe8"/></svg>
<svg style="left:1069.10px;top:139.90px" width="9" height="9" viewBox="0 0 16 16"><path d="M13.500 9.500A5.800 5.800 0 1 1 10.500 3" fill="none" stroke="#e6e6e6" stroke-width="1.500"/><path d="M9.500 0.500l4 2.700-4 2.500z" fill="#e6e6e6"/></svg>
<svg style="left:1069.10px;top:152.50px" width="9" height="9" viewBox="0 0 16 16"><rect x="1.500" y="7" width="7.500" height="7.500" fill="#e6e6e6"/><rect x="1.500" y="1.500" width="13" height="13" fill="none" stroke="#9a9a9a" stroke-width="0.900" stroke-dasharray="2 1.200"/></svg>
<svg style="left:1069.10px;top:164.90px" width="9" height="9" viewBox="0 0 16 16"><rect x="1.500" y="2" width="9" height="9" fill="#e6e6e6"/><path d="M7 8h8v6.500H7z" fill="#5f86dc"/><path d="M9.500 11.200h4M12 9.600l1.800 1.600-1.800 1.600" stroke="#fff" stroke-width="0.900" fill="none"/></svg>
<svg style="left:1069.10px;top:177.10px" width="9" height="9" viewBox="0 0 16 16"><path d="M3 14L12 2" stroke="#b0b0b0" stroke-width="1.300"/><path d="M10 14l3-5" stroke="#8a8a8a" stroke-width="1" stroke-dasharray="1.500 1"/></svg>
<svg style="left:1069.10px;top:189.70px" width="9" height="9" viewBox="0 0 16 16"><path d="M4 15L13 1" stroke="#b0b0b0" stroke-width="1.300"/><path d="M1 12l3-4" stroke="#8a8a8a" stroke-width="1"/></svg>
<svg style="left:1069.10px;top:201.90px" width="9" height="9" viewBox="0 0 16 16"><rect x="2" y="3.500" width="12" height="9" fill="none" stroke="#e6e6e6" stroke-width="1.400"/></svg>
<svg style="left:1069.10px;top:214.90px" width="9" height="9" viewBox="0 0 16 16"><path d="M5.500 3.500H2v9.500h12V3.500h-3.500" fill="none" stroke="#e6e6e6" stroke-width="1.400"/><path d="M6.500 3.500h3" stroke="#8a8a8a" stroke-width="0.800"/></svg>
<svg style="left:1069.10px;top:226.30px" width="9" height="9" viewBox="0 0 16 16"><path d="M2 8h3M6.500 8h3M11 8h3" stroke="#b8b8b8" stroke-width="1.200"/><path d="M8 5v6" stroke="#8a8a8a" stroke-width="0.700"/></svg>
<svg style="left:1069.10px;top:239.30px" width="9" height="9" viewBox="0 0 16 16"><path d="M2 14h12V3z" fill="#d4d4d4"/><path d="M2 10l7-7" stroke="#8a8a8a" stroke-width="0.800"/></svg>
<svg style="left:1069.10px;top:251.50px" width="9" height="9" viewBox="0 0 16 16"><path d="M2 14h12V8A8 8 0 0 0 6 2z" fill="#c4c4c4"/><path d="M2 14V6" stroke="#8a8a8a" stroke-width="0.800"/></svg>
<svg style="left:1069.10px;top:263.90px" width="9" height="9" viewBox="0 0 16 16"><rect x="1.500" y="2.500" width="10" height="12" fill="#c9c9c9"/><rect x="1.500" y="2.500" width="10" height="3" fill="#e6e6e6"/><path d="M13.500 1.500v13" stroke="#e6e6e6" stroke-width="1.500"/><path d="M4.800 5.500v9M8.200 5.500v9" stroke="#6a6a6a" stroke-width="0.800"/></svg>
<svg style="left:1069.10px;top:283.70px" width="9" height="9" viewBox="0 0 16 16"><rect x="1.500" y="1.500" width="9.500" height="9.500" rx="1.500" fill="#4f7be0"/><rect x="5" y="5" width="9.500" height="9.500" rx="1" fill="#c9d6f6"/></svg>
<svg style="left:1069.10px;top:295.30px" width="9" height="9" viewBox="0 0 16 16"><rect x="1.500" y="1.500" width="9.500" height="7" fill="#d4dcf0"/><rect x="5" y="7" width="9.500" height="7.500" fill="#4f7be0"/><rect x="5" y="7" width="9.500" height="2.500" fill="#dfe6fa"/></svg>
<svg style="left:1069.10px;top:307.50px" width="9" height="9" viewBox="0 0 16 16"><rect x="1.500" y="1.500" width="11" height="9" rx="1" fill="#4f7be0"/><rect x="4" y="8.500" width="10.500" height="6" fill="#dfe6fa"/></svg>
<svg style="left:1069.10px;top:320.70px" width="9" height="9" viewBox="0 0 16 16"><rect x="3" y="1.500" width="9" height="6" fill="#4f7be0"/><rect x="1.500" y="6" width="13" height="8.500" fill="#e4e9f8"/><rect x="1.500" y="13" width="13" height="1.500" fill="#4f7be0"/></svg>
<svg style="left:1069.10px;top:337.70px" width="9" height="9" viewBox="0 0 16 16"><rect x="1.500" y="2" width="13" height="9.500" fill="#d9e0f4"/><rect x="1.500" y="9.500" width="13" height="4.500" fill="#4f7be0"/><rect x="1.500" y="2" width="13" height="2" fill="#8aa6e6"/></svg>
<svg style="left:1069.10px;top:349.30px" width="9" height="9" viewBox="0 0 16 16"><rect x="2" y="1.500" width="12" height="8" fill="#d9e0f4"/><rect x="4" y="8" width="9" height="6" fill="#4f7be0"/><rect x="2" y="1.500" width="12" height="2" fill="#8aa6e6"/></svg>
<div class="a" style="left:1068.6px;top:277.6px;width:10px;height:0.8px;background:#6a6a6a;"></div>
<div class="a" style="left:1068.6px;top:334px;width:10px;height:0.9px;background:#c4c4c4;"></div>
<div class="a" style="left:1074px;top:86.2px;width:5.2px;height:31.4px;background:#bdd5fa;border-radius:1.5px"></div>
<div class="a" style="left:1074.2px;top:491.6px;width:6px;height:43.5px;background:#4e4e4e;border-left:1px solid #3a3a3a"></div>
<div class="a" style="left:1076px;top:497px;width:4px;height:12px;background:#3c4350;"></div>
<div class="a" style="left:1076px;top:510px;width:4px;height:14px;background:#5f9a7a;"></div>
<svg style="left:0;top:0" width="1080" height="585"><path d="M1057.4 79.64999999999999L1059.5 77.55L1061.6 79.64999999999999" fill="none" stroke="#4c4c4c" stroke-width="1.05"/></svg>
<svg style="left:0;top:0" width="1080" height="585"><path d="M1057.4 514.5500000000001L1059.5 516.65L1061.6 514.5500000000001" fill="none" stroke="#4c4c4c" stroke-width="1.05"/></svg>
<div class="a" style="left:1054.5px;top:294.4px;width:10px;height:9.6px;background:#c9c9c9;"></div>
<svg style="left:0;top:0" width="1080" height="585"><path d="M619.05 524.1999999999999L616.95 526.3L619.05 528.4" fill="none" stroke="#4c4c4c" stroke-width="1.05"/></svg>
<svg style="left:0;top:0" width="1080" height="585"><path d="M1046.95 524.1999999999999L1049.05 526.3L1046.95 528.4" fill="none" stroke="#4c4c4c" stroke-width="1.05"/></svg>
<div class="a" style="left:1033.8px;top:522px;width:9px;height:8.6px;background:#c9c9c9;"></div>
<div class="a" style="left:611px;top:521.4px;width:1.6px;height:10.2px;background:#2e2e2e;"></div>
<div class="a" style="left:1069px;top:537.6px;width:11px;height:22.2px;background:#f2f2f2;"></div>
<svg style="left:0;top:0" width="1080" height="585"><path d="M1072.4 544.05L1074.5 541.95L1076.6 544.05" fill="none" stroke="#4c4c4c" stroke-width="1.05"/></svg>
<svg style="left:0;top:0" width="1080" height="585"><path d="M1072.4 553.5500000000001L1074.5 555.65L1076.6 553.5500000000001" fill="none" stroke="#4c4c4c" stroke-width="1.05"/></svg>
<div class="a" style="left:1024px;top:560px;width:45px;height:10.2px;background:#f2f2f2;"></div>
<svg style="left:0;top:0" width="1080" height="585"><path d="M1029.45 562.9L1027.3500000000001 565L1029.45 567.1" fill="none" stroke="#4c4c4c" stroke-width="1.05"/></svg>
<svg style="left:0;top:0" width="1080" height="585"><path d="M1063.3500000000001 562.9L1065.45 565L1063.3500000000001 567.1" fill="none" stroke="#4c4c4c" stroke-width="1.05"/></svg>
<div class="a" style="left:1034px;top:561px;width:9px;height:8.4px;background:#c9c9c9;"></div>
<div class="a" style="left:1069px;top:559.8px;width:11px;height:10.6px;background:#414141;"></div>
<svg style="left:148px;top:521px" width="140" height="11" viewBox="148 521 140 11"><g fill="#e6e6e6"><path d="M150.4 524.2h0.9v4.6h-0.9zM154 524.2v4.600l-2.600-2.300z"/><path d="M161.600 524.200v4.600l-2.800-2.300z"/><path d="M168.600 524.200v4.600l2.800-2.300z"/><path d="M177.200 524.200v4.600l2.600-2.300zM179.900 524.200h0.900v4.600h-0.900z"/></g><g stroke="#777" stroke-width="0.7" fill="none"><path d="M185.400 521.400l3 10.200M209 531.600l3-10.200M236 531.600l3-10.200M262.600 531.600l3-10.200M276.400 531.600l3-10.200"/></g><path d="M189.600 530.800h17.600" stroke="#f4f4f4" stroke-width="0.8"/><path d="M268.800 526.600h3M270.300 525.100v3" stroke="#8a8a8a" stroke-width="0.7"/></svg>
<div class="t " style="left:191.2px;top:522.7px;font-size:7px;color:#fafafa;font-weight:bold">模型</div>
<div class="t " style="left:214.2px;top:522.9px;font-size:6.8px;color:#b9b9b9;">布局<span class="sf">1</span></div>
<div class="t " style="left:240.8px;top:522.9px;font-size:6.8px;color:#b9b9b9;">布局<span class="sf">2</span></div>
<svg style="left:0;top:538px" width="10" height="20" viewBox="0 538 10 20"><g stroke="#777" stroke-width="0.8" fill="none"><path d="M3 541.600l3 3.200M6 541.600l-3 3.200"/><path d="M3.200 551.600l1.800 1.800-1.800 1.800"/></g></svg>
<div class="t" style="left:13.2px;top:540.9px;font-size:7.8px;color:#e6e6e6;letter-spacing:0.08px;font-weight:300">正在恢复执行<span class="mono" style="font-size:6.5px;letter-spacing:0"> LINE </span>命令。</div>
<div class="t" style="left:13.2px;top:550.8px;font-size:7.8px;color:#e6e6e6;letter-spacing:0.08px;font-weight:300">指定下一点或<span class="mono" style="font-size:6.5px;letter-spacing:0"> [</span>角度<span class="mono" style="font-size:6.5px;letter-spacing:0">(A)/</span>长度<span class="mono" style="font-size:6.5px;letter-spacing:0">(L)/</span>闭合<span class="mono" style="font-size:6.5px;letter-spacing:0">(C)/</span>放弃<span class="mono" style="font-size:6.5px;letter-spacing:0">(U)]:</span></div>
<div class="t" style="left:13.2px;top:562.4px;font-size:7.8px;color:#e6e6e6;letter-spacing:0.08px;font-weight:300">命令<span class="mono" style="font-size:6.5px;letter-spacing:0">:</span></div>
<div class="t " style="left:2.6px;top:575.5px;font-size:6.0px;color:#9b9b9b;letter-spacing:-0.02px">1671783.596, 1970829.7064, 0</div>
<div class="a" style="left:159.6px;top:572.6px;width:11.800000000000011px;height:12px;background:#5c5c5c;"></div>
<div class="a" style="left:183.4px;top:572.6px;width:35.19999999999999px;height:12px;background:#5c5c5c;"></div>
<div class="a" style="left:232.8px;top:572.6px;width:11.799999999999983px;height:12px;background:#5c5c5c;"></div>
<div class="a" style="left:294.6px;top:572.6px;width:12.0px;height:12px;background:#5c5c5c;"></div>
<div class="a" style="left:357.6px;top:572.6px;width:12.0px;height:12px;background:#5c5c5c;"></div>
<div class="a" style="left:382.6px;top:572.6px;width:12.0px;height:12px;background:#5c5c5c;"></div>
<svg style="left:147.50px;top:573.90px" width="9" height="9" viewBox="0 0 16 16"><path d="M4 2v12M8 2v12M12 2v12M2 5h12M2 9h12M2 13h12" stroke="#e6e6e6" stroke-width="1.200"/></svg>
<svg style="left:160.80px;top:573.60px" width="9.6" height="9.6" viewBox="0 0 16 16"><path d="M3 2v12M6.500 2v12M10 2v12M13.500 2v12M1.500 4h13M1.500 7.400h13M1.500 10.800h13M1.500 14h13" stroke="#e6e6e6" stroke-width="1.100"/></svg>
<svg style="left:172.40px;top:574.20px" width="8.4" height="8.4" viewBox="0 0 16 16"><path d="M3 2v11.500h11.500" fill="none" stroke="#e6e6e6" stroke-width="1.500"/><path d="M3 9h4.500v4.500" fill="none" stroke="#bdbdbd" stroke-width="0.900"/></svg>
<svg style="left:184.00px;top:573.80px" width="9.2" height="9.2" viewBox="0 0 16 16"><circle cx="8" cy="8" r="6" fill="none" stroke="#e6e6e6" stroke-width="1.500"/><path d="M8 8l4.500-3.500M8 8h5" stroke="#e6e6e6" stroke-width="1"/></svg>
<svg style="left:197.10px;top:573.90px" width="9" height="9" viewBox="0 0 16 16"><rect x="2" y="3" width="12" height="10.500" fill="none" stroke="#e6e6e6" stroke-width="1.500"/></svg>
<svg style="left:209.10px;top:573.90px" width="9" height="9" viewBox="0 0 16 16"><path d="M1.500 13.500h13M3 13L13 3" stroke="#e6e6e6" stroke-width="1.300"/></svg>
<svg style="left:221.50px;top:573.90px" width="9" height="9" viewBox="0 0 16 16"><path d="M8 1v14M2 10h13" stroke="#e6e6e6" stroke-width="2"/><path d="M3 4h5" stroke="#e6e6e6" stroke-width="2.500"/></svg>
<svg style="left:233.90px;top:573.70px" width="9.4" height="9.4" viewBox="0 0 16 16"><rect x="4.500" y="5.500" width="9" height="9" fill="#e6e6e6"/><path d="M1.500 2.500h5v3" fill="none" stroke="#e6e6e6" stroke-width="1.300"/><path d="M7.500 8v6M10.500 8v6" stroke="#555" stroke-width="0.900"/></svg>
<svg style="left:246.90px;top:573.70px" width="9.4" height="9.4" viewBox="0 0 16 16"><path d="M1.500 3h13" stroke="#e6e6e6" stroke-width="1.200"/><path d="M1.500 7.500h13" stroke="#e6e6e6" stroke-width="2"/><path d="M1.500 12.500h13" stroke="#e6e6e6" stroke-width="2.800"/></svg>
<svg style="left:261.60px;top:574.40px" width="8" height="8" viewBox="0 0 16 16"><path d="M5 2l6 11-3.500-.5L6 15z" fill="#e6e6e6"/></svg>
<svg style="left:271.50px;top:573.90px" width="9" height="9" viewBox="0 0 16 16"><path d="M8 1l7 3.2-7 3.2-7-3.2z" fill="#e6e6e6"/><path d="M1 7.6l7 3.2 7-3.2M1 10.8l7 3.2 7-3.2" stroke="#bdbdbd" stroke-width="1.6" fill="none"/></svg>
<svg style="left:282.90px;top:573.70px" width="9.4" height="9.4" viewBox="0 0 16 16"><circle cx="7" cy="7" r="5" fill="#2d6f9a" stroke="#58a6dc" stroke-width="1.700"/><path d="M10.800 10.800l4.200 4.200" stroke="#58a6dc" stroke-width="2.200"/></svg>
<svg style="left:295.80px;top:573.60px" width="9.6" height="9.6" viewBox="0 0 16 16"><rect x="1" y="2.500" width="14" height="11" fill="#4d78d8"/><rect x="8.500" y="2.500" width="6.500" height="5" fill="#b9ccf4"/></svg>
<svg style="left:309.40px;top:574.20px" width="8.4" height="8.4" viewBox="0 0 16 16"><path d="M8 1.500l2 7.500 4.500 4-1.500 1.500L8 11l-5 3.500L1.500 13l4.500-4z" fill="#e6e6e6"/></svg>
<svg style="left:335.70px;top:574.10px" width="8.6" height="8.6" viewBox="0 0 16 16"><path d="M8 1.500l2 7.500 4.500 4-1.500 1.500L8 11l-5 3.500L1.500 13l4.500-4z" fill="#e6e6e6"/></svg>
<svg style="left:347.60px;top:574.40px" width="8" height="8" viewBox="0 0 16 16"><path d="M8 1.500l2 7.500 4.500 4-1.500 1.500L8 11l-5 3.500L1.500 13l4.500-4z" fill="#8a8a8a"/></svg>
<svg style="left:359.30px;top:574.10px" width="8.6" height="8.6" viewBox="0 0 16 16"><rect x="2.0" y="2.0" width="3" height="3" fill="#e6e6e6"/><rect x="2.0" y="6.4" width="3" height="3" fill="#e6e6e6"/><rect x="2.0" y="10.8" width="3" height="3" fill="#e6e6e6"/><rect x="6.4" y="2.0" width="3" height="3" fill="#e6e6e6"/><rect x="6.4" y="6.4" width="3" height="3" fill="#e6e6e6"/><rect x="6.4" y="10.8" width="3" height="3" fill="#e6e6e6"/><rect x="10.8" y="2.0" width="3" height="3" fill="#e6e6e6"/><rect x="10.8" y="6.4" width="3" height="3" fill="#e6e6e6"/><rect x="10.8" y="10.8" width="3" height="3" fill="#e6e6e6"/></svg>
<svg style="left:372.30px;top:574.10px" width="8.6" height="8.6" viewBox="0 0 16 16"><rect x="3" y="3" width="10" height="12" fill="#e6e6e6"/><rect x="2" y="1" width="12" height="2" fill="#bdbdbd"/><path d="M6 5v8M10 5v8" stroke="#666" stroke-width="1"/></svg>
<svg style="left:384.20px;top:574.00px" width="8.8" height="8.8" viewBox="0 0 16 16"><circle cx="8" cy="8" r="6" fill="none" stroke="#e6e6e6" stroke-width="1.500"/><path d="M10.500 6.200a3 3 0 1 0 0 3.600" fill="none" stroke="#e6e6e6" stroke-width="1.300"/></svg>
<div class="t " style="left:319.4px;top:575.6px;font-size:6.2px;color:#c4c4c4;">1:1</div>
<div class="a" style="left:328.40000000000003px;top:578.3px;width:0;height:0;border-left:1.4px solid transparent;border-right:1.4px solid transparent;border-top:1.68px solid #b4b4b4"></div>
<div class="a" style="left:343.4px;top:574.4px;width:1.6px;height:1.6px;background:#e8d25a;"></div>
<div class="a" style="left:354.4px;top:574.8px;width:1.4px;height:1.4px;background:#6f8fd8;"></div>
<div class="a" style="left:976px;top:570.3px;width:104px;height:12.9px;background:#fbfdff;"></div>
<div class="a" style="left:976px;top:583.2px;width:104px;height:1.8px;background:#3a3a3a;"></div>
<svg style="left:975.6px;top:568.6px" width="15.6" height="16" viewBox="0 0 32 32"><rect x="1" y="1" width="30" height="30" rx="6" fill="#ea4f1f" transform="rotate(-6 16 16)"/></svg>
<div class="t " style="left:978.8px;top:568.9px;font-size:13.5px;color:#fff;font-weight:bold;font-style:italic">S</div>
<div class="t " style="left:994px;top:572.2px;font-size:9.4px;color:#2f6faf;font-weight:bold">中</div>
<svg style="left:1006px;top:571px" width="74" height="12" viewBox="1006 571 74 12"><path d="M1013.200 572.600a5 5 0 1 1-5.600 7.600 5.400 5.400 0 0 0 5.600-7.600z" fill="#2f6faf"/><circle cx="1020.600" cy="575.600" r="1.100" fill="none" stroke="#2f6faf" stroke-width="0.700"/><path d="M1024.800 578.200q.8 1.600-.6 2.600" stroke="#2f6faf" stroke-width="1.300" fill="none"/><circle cx="1024.600" cy="578" r=".9" fill="#2f6faf"/><rect x="1031" y="573.600" width="9.400" height="6.800" rx="0.800" fill="#2f6faf"/><path d="M1032.400 575.400h6.600M1032.400 577h6.600" stroke="#dcebf8" stroke-width="0.700" stroke-dasharray="1 0.600"/><path d="M1033.600 578.800h4.200" stroke="#dcebf8" stroke-width="0.700"/><circle cx="1048" cy="574.600" r="1.700" fill="#c9ccd0"/><path d="M1044.400 581.400c0-4.200 7.200-4.200 7.200 0z" fill="#c9ccd0"/><ellipse cx="1049.800" cy="580.400" rx="2.600" ry="1.200" fill="#e4e6e8"/><path d="M1057.600 572.800l2.200-.6 1.200 1 1.200-1 2.200.6 1 2.400-1.600.8v5.200h-5.600v-5.200l-1.600-.8z" fill="#2f6faf"/><path d="M1076.600 572.400a2.600 2.600 0 0 0-3.200 3.400l-4.400 4.600 1.400 1.400 4.600-4.400a2.600 2.600 0 0 0 3.400-3.200l-1.800 1.600-1.400-1.400z" fill="#2f6faf"/></svg>
</body></html>
